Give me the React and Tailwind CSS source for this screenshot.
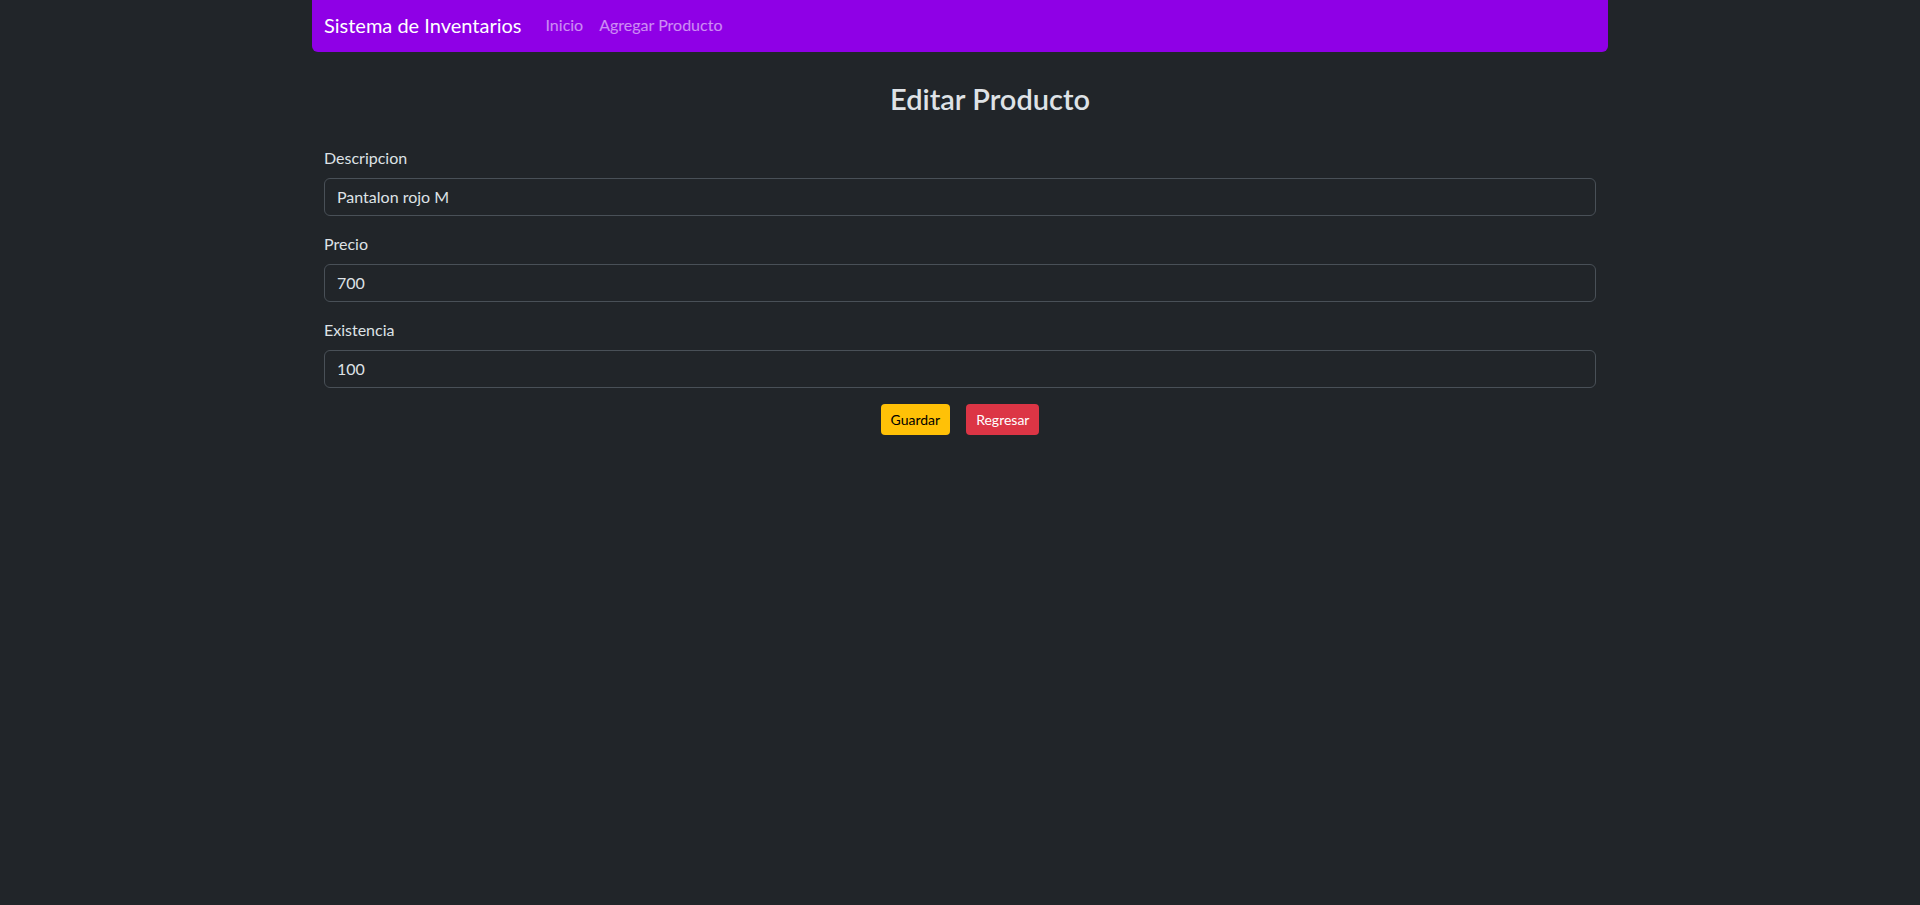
import React, { useState } from 'react';

const fields = [
    { name: 'descripcion', label: 'Descripcion', value: 'Pantalon rojo M' },
    { name: 'precio', label: 'Precio', value: '700' },
    { name: 'existencia', label: 'Existencia', value: '100' },
];

const App = () => {
    const [formData, setFormData] = useState(
        Object.fromEntries(fields.map(f => [f.name, f.value]))
    );

    const handleChange = (e) => {
        const { name, value } = e.target;
        setFormData(prev => ({ ...prev, [name]: value }));
    };

    return (
        <div className="min-h-[905px] bg-[#212529] text-[#dee2e6] font-['Lato',sans-serif]">
            <div className="mx-auto w-[1320px] px-3">
                {/* Navbar */}
                <nav className="h-[52px] bg-[#8f00e6] rounded-b-md px-3 flex items-center">
                    <a href="#" className="text-[20px] text-white mr-4 -mt-[2px]">Sistema de Inventarios</a>
                    <div className="flex items-center -mt-[2px]">
                        <a href="#" className="px-2 text-[16px] text-white/55">Inicio</a>
                        <a href="#" className="px-2 text-[16px] text-white/55">Agregar Producto</a>
                    </div>
                </nav>

                <div className="px-3">
                    <h3 className="text-center text-[29px] font-semibold leading-[1.2] mt-[30px] mb-[29px] pl-[60px]">
                        Editar Producto
                    </h3>

                    <form onSubmit={e => e.preventDefault()}>
                        {fields.map(f => (
                            <div key={f.name} className="mb-4">
                                <label htmlFor={f.name} className="block text-[16px] leading-6 mb-2">
                                    {f.label}
                                </label>
                                <input
                                    id={f.name}
                                    name={f.name}
                                    type="text"
                                    value={formData[f.name]}
                                    onChange={handleChange}
                                    className="w-full h-[38px] px-3 bg-[#212529] border border-[#495057] rounded-md text-[16px] text-[#dee2e6] focus:outline-none"
                                />
                            </div>
                        ))}

                        <div className="flex justify-center gap-4">
                            <button type="submit" className="h-[31px] px-[10px] text-[14px] bg-[#ffc107] text-black rounded">
                                Guardar
                            </button>
                            <button type="button" className="h-[31px] px-[10px] text-[14px] bg-[#dc3545] text-white rounded">
                                Regresar
                            </button>
                        </div>
                    </form>
                </div>
            </div>
        </div>
    );
};

export default App;
